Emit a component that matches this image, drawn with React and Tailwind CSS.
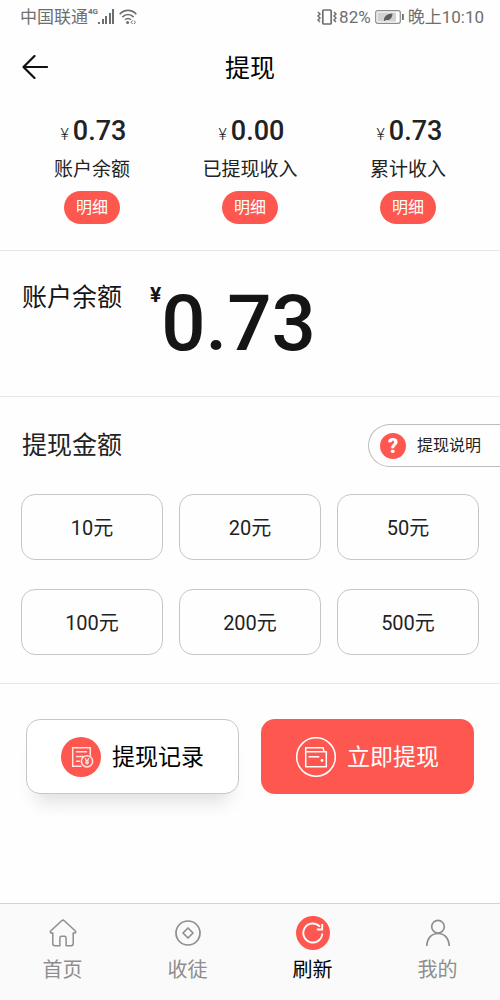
// App.jsx - Withdraw page of the mobile wallet
import React, { useState } from 'react';

const stats = [
  { label: '账户余额', value: '0.73' },
  { label: '已提现收入', value: '0.00' },
  { label: '累计收入', value: '0.73' },
];

const amounts = [10, 20, 50, 100, 200, 500];

const SignalIcon = () => (
  <svg width="17" height="16" viewBox="0 0 17 16" fill="#6e6e6e" aria-hidden="true">
    <rect x="0" y="13" width="2" height="2" />
    <rect x="4" y="10" width="2" height="5" />
    <rect x="7" y="7" width="2" height="8" />
    <rect x="11" y="4" width="2" height="11" />
    <rect x="14" y="0" width="2" height="15" />
  </svg>
);

const WifiIcon = () => (
  <svg width="18" height="16" viewBox="0 0 18 16" fill="none" stroke="#6e6e6e" strokeWidth="1.6" aria-hidden="true">
    <path d="M.7 5.2C5.3.1 12.7.1 17.3 5.2" />
    <path d="M3.4 8.1c3.2-3.4 8-3.4 11.2 0" />
    <path d="M6 10.8c1.7-1.8 4.3-1.8 6 0" />
    <circle cx="8.6" cy="13.4" r="1.5" fill="#6e6e6e" stroke="none" />
    <path d="M13.6 11.6l-1.5 1.7 1.5 1.7M15 11.6l1.5 1.7-1.5 1.7" strokeWidth="1" />
  </svg>
);

const VibrateIcon = () => (
  <svg width="20" height="16" viewBox="0 0 20 16" fill="none" stroke="#6e6e6e" aria-hidden="true">
    <rect x="5.8" y="1" width="8.4" height="14" rx="1" strokeWidth="1.7" />
    <path d="M1 3l2 2-2 2 2 2-2 2 2 2M17 3l2 2-2 2 2 2-2 2 2 2" strokeWidth="1.5" />
  </svg>
);

const BatteryIcon = () => (
  <svg width="29" height="14" viewBox="0 0 29 14" aria-hidden="true">
    <rect x=".7" y=".7" width="24.6" height="12.6" rx="2" fill="#fff" stroke="#8c8c8c" strokeWidth="1.2" />
    <rect x="2.5" y="2.5" width="18.5" height="9" fill="#d2d2d2" />
    <path d="M9 11c-.4-4 2-7 8.5-7.5-.3 5-3 7.600-6.700 6.200L9.800 11z" fill="#5c5c5c" />
    <rect x="27" y="4" width="1.8" height="6" fill="#6e6e6e" />
  </svg>
);

const BackIcon = () => (
  <svg width="26" height="24" viewBox="0 0 26 24" fill="none" stroke="#111" strokeWidth="2.2" strokeLinecap="round" strokeLinejoin="round" aria-hidden="true">
    <path d="M12.500 1L1.500 12l11 11M1.500 12H25" />
  </svg>
);

const RecordIcon = () => (
  <svg width="40" height="40" viewBox="0 0 40 40" fill="none" stroke="#ffe6e3" strokeWidth="1.500" aria-hidden="true">
    <circle cx="20" cy="20" r="20" fill="#fd5750" stroke="none" />
    <path d="M20.500 29.300h-8.800V10.700h17.600v8" />
    <path d="M15 14.700h11M15 19.500h7.500M15 24.300h4" />
    <circle cx="26" cy="24.300" r="5.600" />
    <path d="M23.900 21.200l2.100 2.700 2.100-2.700M26 23.900v3.800M24 24h4M24 25.900h4" strokeWidth="1.100" />
  </svg>
);

const WalletIcon = () => (
  <svg width="40" height="40" viewBox="0 0 40 40" fill="none" stroke="#fff" strokeWidth="1.500" aria-hidden="true">
    <circle cx="20" cy="20" r="19.300" />
    <path d="M9.700 14.800v-4h17.500l.8 4M9.700 14.800h20.600v14.900H9.700z" strokeLinejoin="round" />
    <path d="M12.500 19.800h10.800" />
    <circle cx="26" cy="23.500" r="1.400" fill="#fff" stroke="none" />
  </svg>
);

const HomeIcon = () => (
  <svg width="28" height="28" viewBox="0 0 28 28" fill="none" stroke="#8e8e8e" strokeWidth="1.500" strokeLinejoin="round" aria-hidden="true">
    <path d="M12.700 1.700L1.900 11.800c-1.100 1.100-.5 2.300.8 2.300h1.100v10.500c0 1.400.8 2.100 2.100 2.100h5V19c0-1.200.5-1.700 1.600-1.700h3c1.100 0 1.600.5 1.600 1.700v7.700h5c1.300 0 2.100-.7 2.100-2.100V14.100h1.100c1.300 0 1.900-1.200.8-2.300L15.300 1.700c-.9-.8-1.700-.8-2.600 0z" />
  </svg>
);

const CoinIcon = () => (
  <svg width="28" height="28" viewBox="0 0 28 28" fill="none" stroke="#8e8e8e" strokeWidth="1.700" strokeLinejoin="round" aria-hidden="true">
    <circle cx="14" cy="14" r="12" />
    <path d="M14 9l5 5-5 5-5-5z" />
  </svg>
);

const RefreshIcon = () => (
  <svg width="34" height="34" viewBox="0 0 34 34" fill="none" stroke="#fff" strokeWidth="1.900" aria-hidden="true">
    <circle cx="17" cy="17" r="17" fill="#fd5750" stroke="none" />
    <path d="M26.300 17.500a9.500 9.500 0 1 1-2.400-6.800" />
    <path d="M20.800 13.500h5.400V8" />
  </svg>
);

const UserIcon = () => (
  <svg width="28" height="28" viewBox="0 0 28 28" fill="none" stroke="#8e8e8e" strokeWidth="1.700" aria-hidden="true">
    <circle cx="14" cy="7.700" r="6.300" />
    <path d="M2.800 27c.2-7.800 4.600-12.500 11.200-12.500S25 19.200 25.200 27" />
  </svg>
);

const tabs = [
  { label: '首页', icon: <HomeIcon /> },
  { label: '收徒', icon: <CoinIcon /> },
  { label: '刷新', icon: <RefreshIcon />, active: true },
  { label: '我的', icon: <UserIcon /> },
];

const StatusBar = () => (
  <div className="flex h-[34px] items-center justify-between pl-5 pr-4 text-[17px] leading-5 text-[#6e6e6e]">
    <div className="flex items-center">
      <span>中国联通</span>
      <span className="self-start text-[8px] leading-[10px] font-bold">4G</span>
      <SignalIcon />
      <span className="ml-1"><WifiIcon /></span>
    </div>
    <div className="flex items-center">
      <VibrateIcon />
      <span className="ml-0.5">82%</span>
      <span className="mx-1"><BatteryIcon /></span>
      <span>晚上10:10</span>
    </div>
  </div>
);

const TabBar = () => (
  <nav className="mt-auto grid grid-cols-4 border-t border-[#d4d4d4] bg-[#fafafa] pt-3 pb-[18px]">
    {tabs.map((tab) => (
      <a key={tab.label} href="#" className="flex flex-col items-center gap-2">
        <span className="flex h-[34px] items-center">{tab.icon}</span>
        <span className={tab.active ? 'text-xl leading-6 text-black' : 'text-xl leading-6 text-[#8e8e8e]'}>
          {tab.label}
        </span>
      </a>
    ))}
  </nav>
);

const App = () => {
  const [selected, setSelected] = useState(null);

  return (
    <div className="flex min-h-screen flex-col bg-[#fefefe] font-['Roboto','Noto_Sans_CJK_SC',sans-serif] text-[#222]">
      <StatusBar />

      {/* Title bar */}
      <header className="grid h-[66px] grid-cols-[1fr_auto_1fr] items-center px-[22px]">
        <button type="button" aria-label="返回" className="justify-self-start">
          <BackIcon />
        </button>
        <h1 className="pt-1 text-[25px] leading-8 text-black">提现</h1>
      </header>

      {/* Income overview */}
      <section className="grid grid-cols-3 gap-4 border-b border-[#e6e6e6] px-[21px] pt-4 pb-[26px]">
        {stats.map((item) => (
          <div key={item.label} className="flex flex-col items-center">
            <p className="pl-[3px] text-[27px] leading-[30px] font-medium">
              <span className="mr-1 text-base font-light">¥</span>
              {item.value}
            </p>
            <p className="mt-[11px] text-[19px] leading-6 whitespace-nowrap">{item.label}</p>
            <button type="button" className="mt-[9px] h-[33px] rounded-full bg-[#fd5750] px-3 text-base leading-5 text-white">
              明细
            </button>
          </div>
        ))}
      </section>

      {/* Current balance */}
      <section className="flex items-start border-b border-[#e6e6e6] px-[22px] pt-8 pb-[31px] text-[#151515]">
        <h2 className="pt-px text-[25px] leading-7">账户余额</h2>
        <span className="ml-7 text-[21px] leading-6 font-bold">¥</span>
        <span className="text-[78px] leading-[82px] font-medium">0.73</span>
      </section>

      {/* Amount picker */}
      <section className="border-b border-[#e6e6e6] pt-[27px] pb-7">
        <div className="flex items-center justify-between pl-[22px]">
          <h2 className="text-[25px] leading-8">提现金额</h2>
          <button type="button" className="flex h-[43px] items-center rounded-l-full border border-r-0 border-[#bdbdbd] pr-[19px] pl-[11px] text-base">
            <span className="mr-[11px] flex size-[26px] items-center justify-center rounded-full bg-[#fd5750] text-xl font-black text-white">
              ?
            </span>
            提现说明
          </button>
        </div>
        <div className="mt-[27px] grid grid-cols-3 gap-x-4 gap-y-[29px] px-[21px]">
          {amounts.map((amount) => (
            <button
              key={amount}
              type="button"
              aria-pressed={selected === amount}
              onClick={() => setSelected(amount)}
              className="h-[66px] rounded-[14px] border border-[#c6c6c6] pt-0.5 text-xl"
            >
              {amount}元
            </button>
          ))}
        </div>
      </section>

      {/* Actions */}
      <section className="grid grid-cols-2 gap-[22px] px-[26px] pt-[35px] pb-8">
        <button type="button" className="flex h-[75px] items-center justify-center gap-[11px] rounded-[14px] border border-[#c6c6c6] bg-white text-[23px] text-black shadow-[0_18px_18px_-10px_rgba(0,0,0,0.12)]">
          <RecordIcon />
          <span className="pt-1">提现记录</span>
        </button>
        <button type="button" className="flex h-[75px] items-center justify-center gap-[11px] rounded-[14px] bg-[#fd5750] text-[23px] text-white">
          <WalletIcon />
          <span className="pt-1">立即提现</span>
        </button>
      </section>

      <TabBar />
    </div>
  );
};

export default App;
